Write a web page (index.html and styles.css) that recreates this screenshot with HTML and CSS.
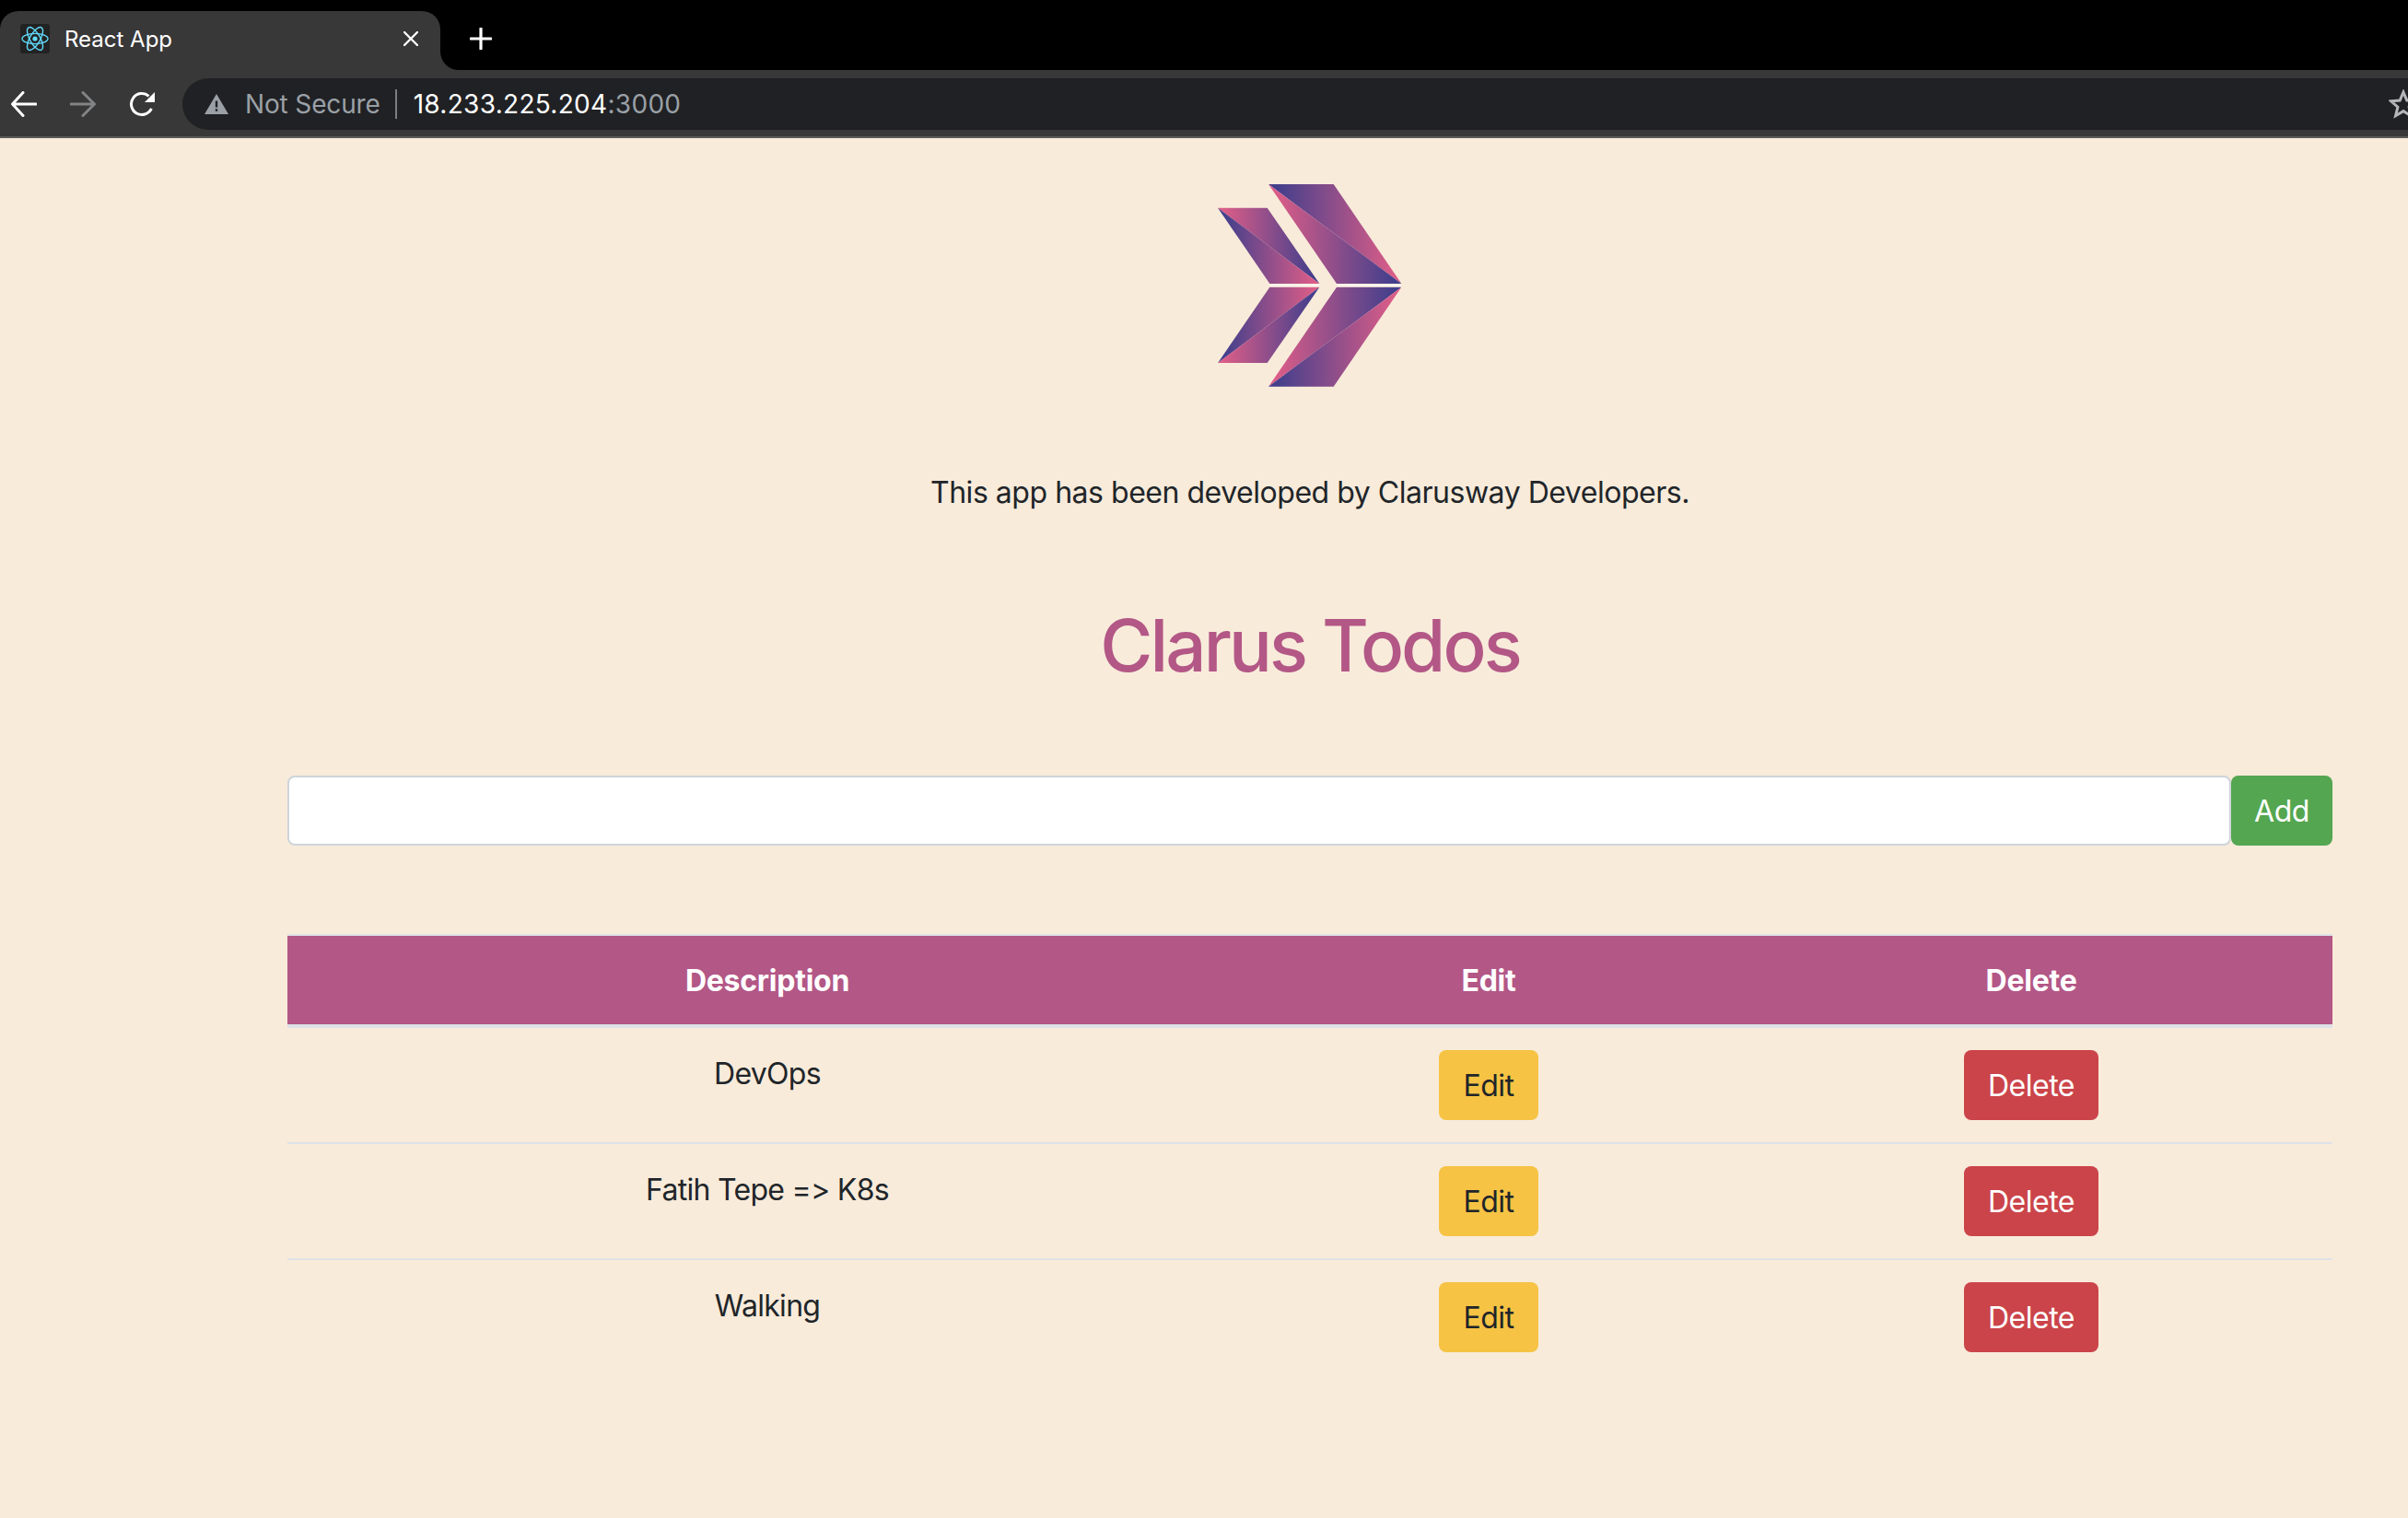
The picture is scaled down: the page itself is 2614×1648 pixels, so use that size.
FILE: index.html
```html
<!DOCTYPE html>
<html lang="en">
<head>
<meta charset="utf-8">
<title>React App</title>
<link rel="stylesheet" href="styles.css">
</head>
<body>
<header class="browser">
  <div class="tabstrip">
    <div class="tab-slot">
      <div class="tab">
        <span class="favicon">
          <svg width="30" height="32" viewBox="-15 -16 30 32" fill="none" stroke="#61dafb" stroke-width="1.4">
            <circle r="2.6" fill="#61dafb" stroke="none"/>
            <ellipse rx="14" ry="5.6"/>
            <ellipse rx="14" ry="5.6" transform="rotate(60)"/>
            <ellipse rx="14" ry="5.6" transform="rotate(120)"/>
          </svg>
        </span>
        <span class="tab-title">React App</span>
        <svg class="tab-close" width="16" height="16" viewBox="0 0 16 16" stroke="#fff" stroke-width="2.4" stroke-linecap="round"><path d="M1 1 15 15M15 1 1 15"/></svg>
      </div>
    </div>
    <div class="tab-rest">
      <svg class="new-tab" width="24" height="24" viewBox="0 0 24 24" stroke="#fff" stroke-width="3.2" stroke-linecap="round"><path d="M12 1V23M1 12H23"/></svg>
    </div>
  </div>
  <div class="toolbar">
    <svg class="nav-icon" width="28" height="28" viewBox="0 0 28 28" fill="none" stroke="#fff" stroke-width="3" stroke-linecap="round"><path d="M27 14H3M13 1.5 1.5 14 13 26.5"/></svg>
    <svg class="nav-icon" width="28" height="28" viewBox="0 0 28 28" fill="none" stroke="#838486" stroke-width="3" stroke-linecap="round"><path d="M1 14H25M14 1.5 26.5 14 14 26.5"/></svg>
    <svg class="nav-icon" width="28" height="28" viewBox="0 0 28 28" fill="none" stroke="#fff" stroke-width="3"><path d="M24.4 18.9A11.5 11.5 0 1 1 21.5 5.3"/><path d="M28 1V12H17Z" fill="#fff" stroke="none"/></svg>
    <div class="address">
      <svg class="warn" width="26" height="22" viewBox="0 0 26 22"><path fill-rule="evenodd" fill="#9aa0a6" d="M13 0 26 22H0ZM11.8 7.5V14.5H14.2V7.5ZM11.8 16.2V18.8H14.2V16.2Z"/></svg>
      <span class="not-secure">Not Secure</span>
      <span class="divider"></span>
      <span class="host">18.233.225.204</span><span class="port">:3000</span>
      <svg class="star" width="32" height="32" viewBox="0 0 32 32" fill="none" stroke="#b5b6b7" stroke-width="3"><path d="M16 3 19.8 12 29.5 12.8 22.1 19.2 24.4 28.7 16 23.6 7.6 28.7 9.9 19.2 2.5 12.8 12.2 12Z"/></svg>
    </div>
  </div>
</header>

<main class="page">
  <svg class="logo" width="199.4" height="219.7" viewBox="97 60 598 659">
    <defs>
      <linearGradient id="bp"><stop offset="0.06" stop-color="#433f8c"/><stop offset="0.94" stop-color="#da5d88"/></linearGradient>
      <linearGradient id="pb"><stop offset="0.06" stop-color="#da5d88"/><stop offset="0.94" stop-color="#433f8c"/></linearGradient>
    </defs>
    <path fill="url(#bp)" d="M262 60H474L695 384Z"/>
    <path fill="url(#pb)" d="M262 60 695 384H484Z"/>
    <path fill="url(#pb)" d="M97 137H258L428 384Z"/>
    <path fill="url(#bp)" d="M97 137 428 384H266Z"/>
    <path fill="url(#pb)" d="M484 395H695L262 719Z"/>
    <path fill="url(#bp)" d="M695 395 474 719H262Z"/>
    <path fill="url(#bp)" d="M266 395H428L97 642Z"/>
    <path fill="url(#pb)" d="M428 395 258 642H97Z"/>
    <path fill="#fbf3ea" d="M266 385H428V394H266ZM484 385H695V394H484Z"/>
  </svg>
  <p class="credit">This app has been developed by Clarusway Developers.</p>
  <h1 class="title">Clarus Todos</h1>
  <form class="add-form">
    <input class="add-input" type="text" aria-label="New todo">
    <button class="btn btn-add" type="button">Add</button>
  </form>
  <table class="todos">
    <colgroup><col class="col-desc"><col class="col-edit"><col class="col-delete"></colgroup>
    <thead>
      <tr><th>Description</th><th>Edit</th><th>Delete</th></tr>
    </thead>
    <tbody>
      <tr>
        <td class="desc">DevOps</td>
        <td><button class="btn btn-edit" type="button">Edit</button></td>
        <td><button class="btn btn-delete" type="button">Delete</button></td>
      </tr>
      <tr>
        <td class="desc">Fatih Tepe =&gt; K8s</td>
        <td><button class="btn btn-edit" type="button">Edit</button></td>
        <td><button class="btn btn-delete" type="button">Delete</button></td>
      </tr>
      <tr class="last">
        <td class="desc">Walking</td>
        <td><button class="btn btn-edit" type="button">Edit</button></td>
        <td><button class="btn btn-delete" type="button">Delete</button></td>
      </tr>
    </tbody>
  </table>
</main>
</body>
</html>
```
FILE: styles.css
```css
* { box-sizing: border-box; }
html, body { margin: 0; height: 100%; }
body {
  background: #f8ebda;
  color: #212529;
  font-family: Inter, "Liberation Sans", sans-serif;
  overflow: hidden;
}

/* browser chrome */
.browser { display: flex; flex-direction: column; }
.tabstrip { display: flex; height: 76px; background: #383838; }
.tab-slot { width: 478px; background: #000; padding-top: 12px; }
.tab {
  display: flex; align-items: center; height: 64px;
  padding: 0 24px 4px 22px;
  background: #383838;
  border-radius: 20px 20px 0 0;
}
.favicon {
  display: flex; align-items: center; justify-content: center;
  width: 32px; height: 32px; background: #222; border-radius: 3px;
}
.tab-title { margin-left: 16px; color: #fff; font-size: 24px; flex: 1; }
.tab-rest { flex: 1; display: flex; align-items: center; padding: 8px 0 0 32px; background: #000; border-bottom-left-radius: 20px; }
.toolbar {
  display: flex; align-items: center; height: 74px;
  padding: 8px 0 6px 12px;
  background: #383838;
  border-bottom: 2px solid #5a5a5a;
}
.nav-icon { flex: none; margin-right: 36px; }
.address {
  flex: 1; display: flex; align-items: center; height: 56px; min-width: 0;
  margin-left: -6px; padding-left: 24px;
  background: #202124;
  border-radius: 28px 0 0 28px;
  font-size: 28px;
}
.warn { flex: none; }
.not-secure { margin-left: 18px; color: #9aa0a6; letter-spacing: -0.15px; }
.divider { width: 2px; height: 32px; margin: 0 18px 0 16px; background: #7c7e81; }
.host { color: #fff; letter-spacing: 0.3px; }
.port { color: #9aa0a6; letter-spacing: 0.3px; }
.star { margin-left: auto; margin-right: -11px; flex: none; }

/* page */
.page { width: 2220px; margin-left: 312px; padding-top: 50px; text-align: center; }
.logo { display: block; margin: 0 auto; }
.credit { margin: 91px 0 0; font-size: 32px; line-height: 48px; letter-spacing: -0.47px; }
.title { margin: 94px 0 0; font-size: 78px; line-height: 96px; font-weight: 500; color: #b35786; letter-spacing: -2.9px; }
.add-form { display: flex; margin-top: 93px; }
.add-input { flex: 1; min-width: 0; height: 76px; background: #fff; border: 2px solid #ced4da; border-radius: 8px; }

.btn {
  display: inline-block; height: 76px; padding: 2px 0 0;
  border: 0; border-radius: 8px;
  font: 400 32px/48px Inter, "Liberation Sans", sans-serif;
  letter-spacing: -0.5px;
}
.btn-add { width: 110px; background: #54a651; color: #fff; }
.btn-edit { width: 108px; background: #f6c344; color: #212529; }
.btn-delete { width: 146px; background: #cb444a; color: #fff; }

.todos { width: 100%; margin-top: 96px; border-collapse: separate; border-spacing: 0; table-layout: fixed; font-size: 32px; }
.col-desc { width: 1042px; }
.col-edit { width: 524px; }
.col-delete { width: 654px; }
.todos th {
  height: 102px; padding: 2px 0 0;
  background: #b35786; color: #fff; font-weight: 700; line-height: 48px; letter-spacing: -0.25px;
  border-top: 2px solid #dee2e6; border-bottom: 4px solid #dee2e6;
}
.todos td { height: 126px; padding: 24px 0; line-height: 48px; letter-spacing: -0.7px; vertical-align: top; border-bottom: 2px solid #dee2e6; }
.todos td.desc { padding: 26px 0 22px; }
.todos .last td { border-bottom: 0; }
```
